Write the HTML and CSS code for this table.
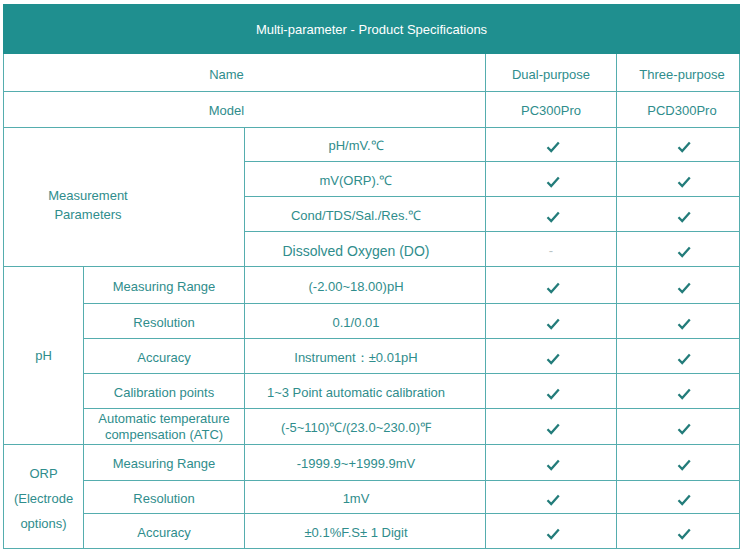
FILE: index.html
```html
<!DOCTYPE html>
<html>
<head>
<meta charset="utf-8">
<link rel="stylesheet" href="styles.css">
</head>
<body>
<table class="spec">
  <colgroup>
    <col class="c1"><col class="c2"><col class="c3"><col class="c4"><col class="c5">
  </colgroup>
  <tr class="h49"><th class="title" colspan="5">Multi-parameter - Product Specifications</th></tr>
  <tr class="h38 low"><td class="shift" colspan="3">Name</td><td>Dual-purpose</td><td class="last">Three-purpose</td></tr>
  <tr class="h36"><td class="shift" colspan="3">Model</td><td>PC300Pro</td><td class="last">PCD300Pro</td></tr>
  <tr class="h34"><td class="mp" colspan="2" rowspan="4">Measurement<br>Parameters</td><td class="val">pH/mV.℃</td><td><svg class="ck" viewBox="0 0 14 12"><path d="M1.5 6.2 L5.2 10 L12.8 1.5"/></svg></td><td class="last"><svg class="ck" viewBox="0 0 14 12"><path d="M1.5 6.2 L5.2 10 L12.8 1.5"/></svg></td></tr>
  <tr class="h35"><td class="val">mV(ORP).℃</td><td><svg class="ck" viewBox="0 0 14 12"><path d="M1.5 6.2 L5.2 10 L12.8 1.5"/></svg></td><td class="last"><svg class="ck" viewBox="0 0 14 12"><path d="M1.5 6.2 L5.2 10 L12.8 1.5"/></svg></td></tr>
  <tr class="h35"><td class="val">Cond/TDS/Sal./Res.℃</td><td><svg class="ck" viewBox="0 0 14 12"><path d="M1.5 6.2 L5.2 10 L12.8 1.5"/></svg></td><td class="last"><svg class="ck" viewBox="0 0 14 12"><path d="M1.5 6.2 L5.2 10 L12.8 1.5"/></svg></td></tr>
  <tr class="h35"><td class="val big">Dissolved Oxygen (DO)</td><td class="dash">-</td><td class="last"><svg class="ck" viewBox="0 0 14 12"><path d="M1.5 6.2 L5.2 10 L12.8 1.5"/></svg></td></tr>
  <tr class="h37"><td class="ph" rowspan="5">pH</td><td>Measuring Range</td><td class="val">(-2.00~18.00)pH</td><td><svg class="ck" viewBox="0 0 14 12"><path d="M1.5 6.2 L5.2 10 L12.8 1.5"/></svg></td><td class="last"><svg class="ck" viewBox="0 0 14 12"><path d="M1.5 6.2 L5.2 10 L12.8 1.5"/></svg></td></tr>
  <tr class="h35"><td>Resolution</td><td class="val">0.1/0.01</td><td><svg class="ck" viewBox="0 0 14 12"><path d="M1.5 6.2 L5.2 10 L12.8 1.5"/></svg></td><td class="last"><svg class="ck" viewBox="0 0 14 12"><path d="M1.5 6.2 L5.2 10 L12.8 1.5"/></svg></td></tr>
  <tr class="h35"><td>Accuracy</td><td class="val">Instrument：±0.01pH</td><td><svg class="ck" viewBox="0 0 14 12"><path d="M1.5 6.2 L5.2 10 L12.8 1.5"/></svg></td><td class="last"><svg class="ck" viewBox="0 0 14 12"><path d="M1.5 6.2 L5.2 10 L12.8 1.5"/></svg></td></tr>
  <tr class="h35"><td>Calibration points</td><td class="val">1~3 Point automatic calibration</td><td><svg class="ck" viewBox="0 0 14 12"><path d="M1.5 6.2 L5.2 10 L12.8 1.5"/></svg></td><td class="last"><svg class="ck" viewBox="0 0 14 12"><path d="M1.5 6.2 L5.2 10 L12.8 1.5"/></svg></td></tr>
  <tr class="h36"><td class="two">Automatic temperature<br>compensation (ATC)</td><td class="val">(-5~110)℃/(23.0~230.0)℉</td><td><svg class="ck" viewBox="0 0 14 12"><path d="M1.5 6.2 L5.2 10 L12.8 1.5"/></svg></td><td class="last"><svg class="ck" viewBox="0 0 14 12"><path d="M1.5 6.2 L5.2 10 L12.8 1.5"/></svg></td></tr>
  <tr class="h36"><td class="orp" rowspan="3">ORP<br>(Electrode<br>options)</td><td>Measuring Range</td><td class="val">-1999.9~+1999.9mV</td><td><svg class="ck" viewBox="0 0 14 12"><path d="M1.5 6.2 L5.2 10 L12.8 1.5"/></svg></td><td class="last"><svg class="ck" viewBox="0 0 14 12"><path d="M1.5 6.2 L5.2 10 L12.8 1.5"/></svg></td></tr>
  <tr class="h33"><td>Resolution</td><td class="val">1mV</td><td><svg class="ck" viewBox="0 0 14 12"><path d="M1.5 6.2 L5.2 10 L12.8 1.5"/></svg></td><td class="last"><svg class="ck" viewBox="0 0 14 12"><path d="M1.5 6.2 L5.2 10 L12.8 1.5"/></svg></td></tr>
  <tr class="h35"><td>Accuracy</td><td class="val">±0.1%F.S± 1 Digit</td><td><svg class="ck" viewBox="0 0 14 12"><path d="M1.5 6.2 L5.2 10 L12.8 1.5"/></svg></td><td class="last"><svg class="ck" viewBox="0 0 14 12"><path d="M1.5 6.2 L5.2 10 L12.8 1.5"/></svg></td></tr>
</table>
</body>
</html>
```
FILE: styles.css
```css
html, body {
  margin: 0;
  padding: 0;
  background: #ffffff;
}
body {
  padding: 4px 3px 0 3px;
  font-family: "Liberation Sans", Arial, sans-serif;
}
.spec {
  width: 736px;
  border-collapse: collapse;
  table-layout: fixed;
  color: #2f8d8c;
  font-size: 13px;
}
.c1 { width: 80px; }
.c2 { width: 161px; }
.c3 { width: 241px; }
.c4 { width: 131px; }
.c5 { width: 123px; }
.spec td, .spec th {
  border: 1px solid #55adae;
  text-align: center;
  vertical-align: middle;
  padding: 3px 0 0 0;
  font-weight: normal;
  line-height: 16px;
}
.spec th.title {
  background: #1f8f8f;
  color: #ffffff;
  border-color: #1f8f8f;
  font-size: 13px;
  padding-top: 1px;
}
.h49 { height: 49px; }
.h38 { height: 38px; }
.h37 { height: 37px; }
.h36 { height: 36px; }
.h35 { height: 35px; }
.h34 { height: 34px; }
.h33 { height: 33px; }
.spec .low td { padding-top: 5px; }
.spec .shift { padding-right: 36px; }
.spec .mp { padding-right: 72px; line-height: 19px; padding-top: 16px; }
.spec .val { padding-right: 18px; }
.big { font-size: 14px; }
.spec .last { padding-left: 8px; }
.dash { color: #b9c4c4; }
.spec .ph { padding-top: 0; }
.spec .two { line-height: 16px; padding-top: 1px; }
.spec .orp { line-height: 25px; padding-top: 4px; }
.ck {
  width: 14px;
  height: 12px;
  display: block;
  margin: 2px auto 0 auto;
  position: relative;
  left: 2px;
}
.ck path {
  fill: none;
  stroke: #237c7a;
  stroke-width: 2.3;
  stroke-linecap: butt;
  stroke-linejoin: miter;
}
```
